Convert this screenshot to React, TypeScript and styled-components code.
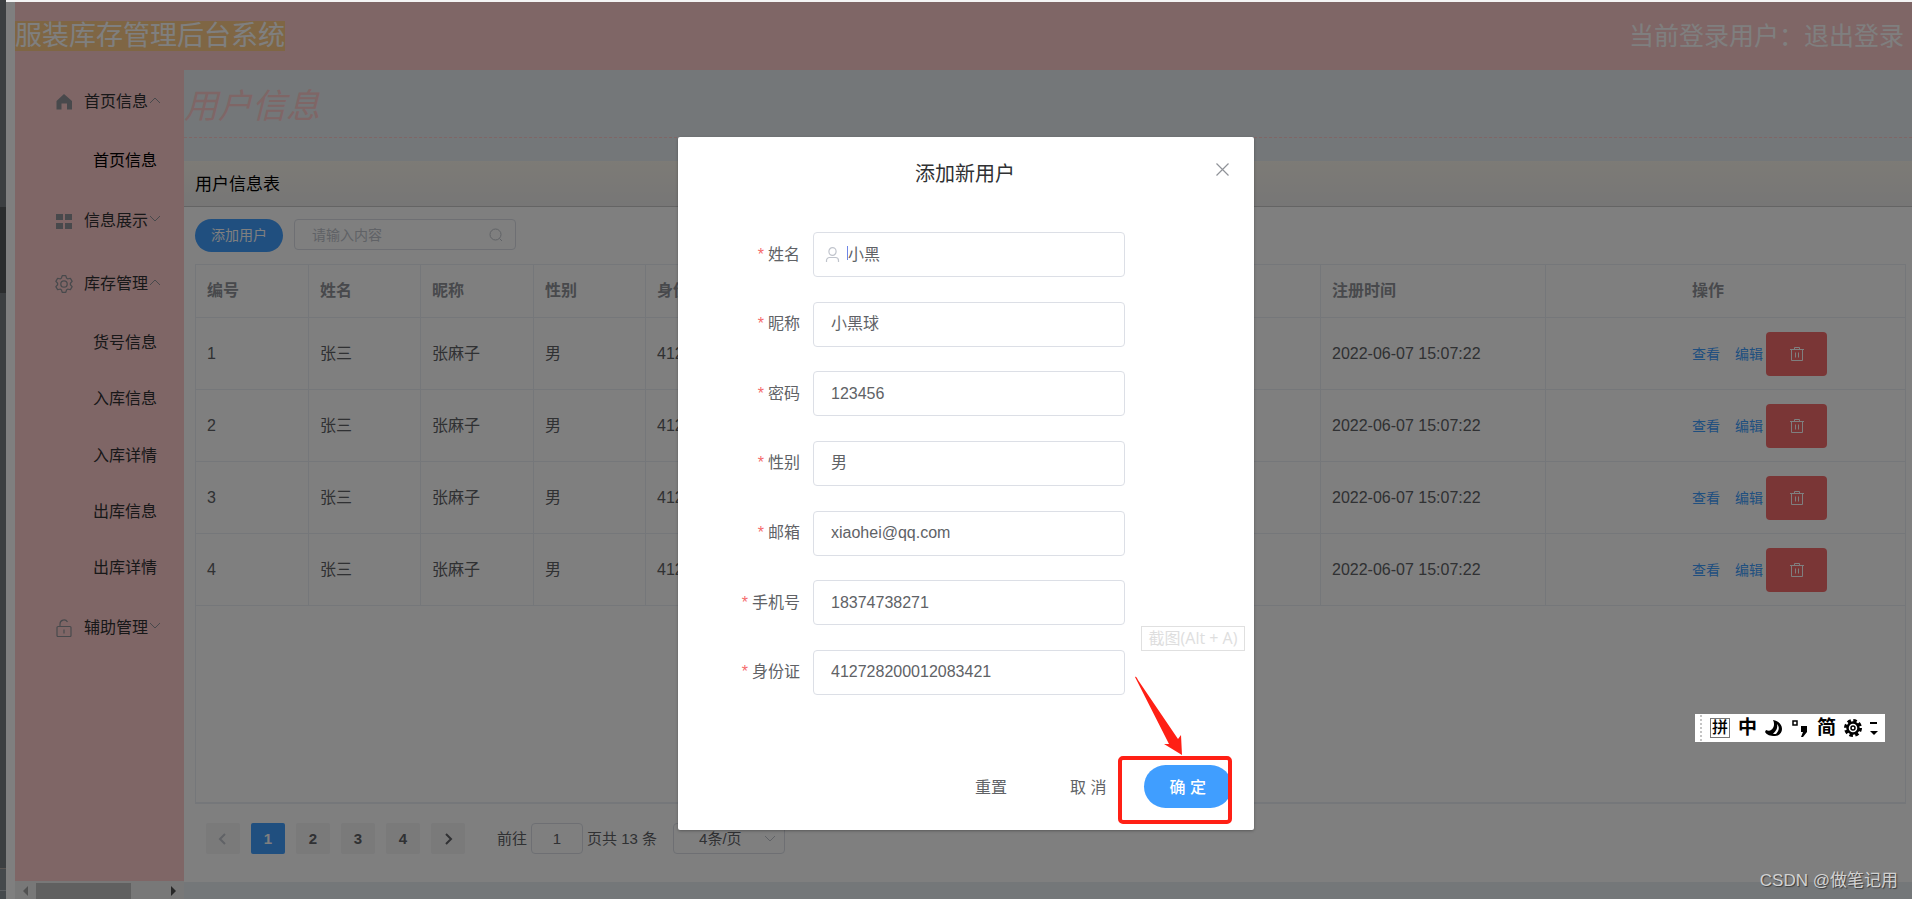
import React from 'react';
import styled, { createGlobalStyle } from 'styled-components';

const GlobalStyle = createGlobalStyle`
  * { box-sizing: border-box; }
  body {
    margin: 0;
    font-family: "Liberation Sans", "Noto Sans CJK SC", sans-serif;
    font-size: 16px;
    line-height: 24px;
    color: #606266;
    background: #fff;
  }
  button, input, select { font: inherit; color: inherit; margin: 0; }
  a { text-decoration: none; color: inherit; }
  ul { list-style: none; margin: 0; padding: 0; }
  svg { display: block; flex: none; }
`;

/* ---------- frame ---------- */

const Window = styled.div`
  display: flex;
  min-height: 100vh;
`;

const EditorStrip = styled.div`
  display: flex;
  flex-direction: column;
  width: 6px;
  background: #3c3f41;
  padding-top: 207px;
  justify-content: space-between;
`;

const StripThumb = styled.div`
  height: 86px;
  background: #2b2d2e;
`;

const StripFoot = styled.div`
  height: 31px;
  border-top: 1px solid #5a5552;
  background: linear-gradient(#45494c 21px, #5a5d60 21px, #5a5d60 22px, #45494c 22px);
`;

const Page = styled.div`
  position: relative;
  flex: 1;
  min-width: 0;
  display: flex;
  flex-direction: column;
  border-top: 2px solid #f4f4f4;
  padding-left: 9px;
`;

const TopBar = styled.header`
  display: flex;
  align-items: center;
  justify-content: space-between;
  height: 68px;
  padding-right: 8px;
  background: #ffcccc;
  color: #fff;
`;

const Brand = styled.h1`
  margin: 0;
  font-size: 27px;
  line-height: 30px;
  font-weight: 400;
  background: #ffcc88;
`;

const Account = styled.div`
  font-size: 25px;
  line-height: 30px;
`;

const Body = styled.div`
  flex: 1;
  display: flex;
`;

/* ---------- sidebar ---------- */

const Sidebar = styled.aside`
  display: flex;
  flex-direction: column;
  width: 169px;
  background: #ffcccc;
`;

const Menu = styled.nav`
  flex: 1;
`;

const MenuTitle = styled.a`
  display: flex;
  align-items: center;
  height: 63px;
  padding-left: 40px;
  color: #303133;
  svg:first-child { color: #909399; margin-right: 11px; }
  svg:last-child { color: #909399; margin: 0 0 3px 1px; }
`;

const SubMenu = styled.ul<{ $height: number }>`
  display: flex;
  flex-direction: column;
  height: ${p => p.$height}px;
`;

const SubItem = styled.li<{ $active?: boolean }>`
  flex: 1;
  display: flex;
  align-items: center;
  padding-left: 78px;
  color: ${p => (p.$active ? '#000' : '#303133')};
`;

const ScrollBar = styled.div`
  display: flex;
  align-items: flex-end;
  justify-content: space-between;
  height: 18px;
  background: #f1f1f1;
`;

const ScrollThumb = styled.div`
  width: 95px;
  height: 16px;
  margin-right: auto;
  background: #c1c1c1;
`;

/* ---------- content ---------- */

const Content = styled.main`
  flex: 1;
  min-width: 0;
  display: flex;
  flex-direction: column;
  padding-bottom: 17px;
  background: #e9eef3;
`;

const PageTitle = styled.h2`
  margin: 0 0 23px;
  height: 68px;
  padding-top: 13px;
  font-size: 34px;
  line-height: 46px;
  font-weight: 400;
  font-style: italic;
  color: #ffcccc;
  border-bottom: 1px dashed #ffcccc;
`;

const CardHead = styled.div`
  height: 46px;
  padding-left: 11px;
  font-size: 17px;
  line-height: 48px;
  color: #000;
  background: linear-gradient(#faf6ec, #eeedec);
  border-bottom: 1px solid #c8c8c8;
`;

const Card = styled.section`
  flex: 1;
  display: flex;
  flex-direction: column;
  padding: 12px 6px 28px 11px;
  background: #fff;
`;

const Toolbar = styled.div`
  display: flex;
  align-items: flex-start;
  gap: 11px;
  height: 45px;
`;

const AddButton = styled.button`
  width: 88px;
  height: 33px;
  padding: 0;
  border: 0;
  border-radius: 17px;
  background: #409eff;
  color: #fff;
  font-size: 14px;
  line-height: 31px;
`;

const SearchBox = styled.label`
  display: flex;
  align-items: center;
  width: 222px;
  height: 31px;
  padding: 0 12px 0 17px;
  border: 1px solid #dcdfe6;
  border-radius: 4px;
  color: #c0c4cc;
  input {
    flex: 1;
    min-width: 0;
    border: 0;
    padding: 0;
    outline: 0;
    background: none;
    font-size: 14px;
  }
  input::placeholder { color: #c0c4cc; }
`;

const TableFrame = styled.div`
  flex: 1;
  border: 1px solid #ebeef5;
  border-bottom-width: 2px;
`;

const Table = styled.table`
  width: 100%;
  table-layout: fixed;
  border-collapse: separate;
  border-spacing: 0;
  th, td {
    padding: 0 0 0 11px;
    text-align: left;
    white-space: nowrap;
    overflow: hidden;
    border-right: 1px solid #ebeef5;
    border-bottom: 1px solid #ebeef5;
  }
  th { height: 53px; color: #909399; font-weight: 700; }
  td { height: 72px; }
  th:last-child, td:last-child { padding-left: 146px; border-right: 0; }
`;

const Actions = styled.div`
  display: flex;
  align-items: center;
`;

const RowLink = styled.a`
  margin-right: 15px;
  font-size: 14px;
  color: #409eff;
  & + & { margin-right: 3px; }
`;

const DeleteButton = styled.button`
  display: flex;
  align-items: center;
  justify-content: center;
  width: 61px;
  height: 44px;
  border: 0;
  border-radius: 4px;
  background: #f56c6c;
  color: #fff;
`;

const Pager = styled.div`
  display: flex;
  align-items: center;
  gap: 11px;
  padding: 19px 0 0 11px;
  font-size: 15px;
`;

const PageButton = styled.button<{ $active?: boolean }>`
  display: flex;
  align-items: center;
  justify-content: center;
  width: 34px;
  height: 31px;
  padding: 0;
  border: 0;
  border-radius: 2px;
  font-weight: 700;
  color: ${p => (p.$active ? '#fff' : '#606266')};
  background: ${p => (p.$active ? '#409eff' : '#f4f4f5')};
  &:disabled { color: #c0c4cc; }
`;

const Jump = styled.label`
  display: flex;
  align-items: center;
  gap: 4px;
  margin: 0 5px 0 21px;
  input {
    width: 52px;
    height: 31px;
    text-align: center;
    border: 1px solid #dcdfe6;
    border-radius: 4px;
    background: none;
  }
`;

const SizePicker = styled.div`
  display: flex;
  align-items: center;
  svg { margin-left: -21px; color: #c0c4cc; pointer-events: none; }
  select {
    appearance: none;
    width: 112px;
    height: 31px;
    padding: 0 0 0 25px;
    border: 1px solid #dcdfe6;
    border-radius: 4px;
    background: none;
  }
`;

/* ---------- dialog ---------- */

const Mask = styled.div`
  position: absolute;
  inset: 0;
  display: flex;
  justify-content: center;
  align-items: flex-start;
  padding: 135px 0 0 14px;
  background: rgba(0, 0, 0, 0.5);
`;

const Dialog = styled.section`
  position: relative;
  width: 576px;
  padding: 24px 22px 22px 0;
  background: #fff;
  border-radius: 2px;
  box-shadow: 0 1px 3px rgba(0, 0, 0, 0.3);
`;

const DialogHead = styled.header`
  display: flex;
  justify-content: center;
  padding-left: 20px;
  margin-bottom: 44px;
  h3 {
    margin: 0;
    font-size: 20px;
    line-height: 27px;
    font-weight: 400;
    color: #303133;
  }
`;

const CloseButton = styled.button`
  position: absolute;
  top: 22px;
  right: 21px;
  padding: 2px;
  border: 0;
  background: none;
  color: #909399;
`;

const Form = styled.form`
  display: flex;
  flex-direction: column;
  justify-content: space-between;
  height: 463px;
`;

const Field = styled.div`
  display: flex;
  align-items: center;
  label { width: 122px; margin-right: 13px; text-align: right; }
  label::before { content: "*"; color: #f56c6c; margin-right: 4px; }
`;

const FieldBox = styled.div<{ $icon?: boolean }>`
  display: flex;
  align-items: center;
  width: 312px;
  height: 45px;
  padding-left: ${p => (p.$icon ? 11 : 17)}px;
  border: 1px solid #dcdfe6;
  border-radius: 4px;
  color: #c0c4cc;
  input {
    flex: 1;
    min-width: 0;
    padding: 0;
    border: 0;
    outline: 0;
    background: none;
    color: #606266;
  }
`;

const Caret = styled.span`
  width: 1px;
  height: 14px;
  margin: 0 0 4px 7px;
  background: #6f86e6;
`;

const DialogFoot = styled.footer`
  display: flex;
  justify-content: flex-end;
  gap: 11px;
  margin-top: 70px;
`;

const FootButton = styled.button<{ $primary?: boolean }>`
  height: 43px;
  padding: 2px 26px 0;
  border: 0;
  border-radius: 22px;
  background: ${p => (p.$primary ? '#409eff' : 'transparent')};
  color: ${p => (p.$primary ? '#fff' : '#606266')};
  font-weight: ${p => (p.$primary ? 500 : 400)};
`;

/* ---------- things lying over the page ---------- */

const Highlight = styled.div`
  position: absolute;
  right: 22px;
  bottom: 6px;
  width: 114px;
  height: 68px;
  border: 4px solid #ff2015;
  border-radius: 5px;
`;

const Arrow = styled.svg`
  position: absolute;
  right: 72px;
  bottom: 75px;
`;

const Hint = styled.div`
  position: absolute;
  right: 9px;
  bottom: 179px;
  width: 104px;
  height: 25px;
  border: 1px solid #e0e0e0;
  font-family: "Open Sans", "Noto Sans CJK SC", sans-serif;
  font-size: 16px;
  line-height: 23px;
  text-align: center;
  white-space: nowrap;
  color: #dedede;
`;

const ImeBar = styled.div`
  position: absolute;
  right: 27px;
  bottom: 157px;
  display: flex;
  align-items: center;
  gap: 8px;
  width: 190px;
  height: 28px;
  padding-left: 5px;
  background: #fff;
  color: #000;
  font-size: 19px;
  font-weight: 700;
  white-space: nowrap;
`;

const Dots = styled.span`
  height: 26px;
  border-left: 2px dotted #c4c4c4;
`;

const Boxed = styled.span`
  width: 20px;
  height: 20px;
  border: 1px solid #777;
  font-size: 16px;
  font-weight: 500;
  line-height: 18px;
  text-align: center;
`;

const Watermark = styled.div`
  position: absolute;
  right: 14px;
  bottom: 6px;
  font-size: 17px;
  color: #d2d2d2;
  text-shadow: 1px 1px 1px #3c3c3c;
`;

/* ---------- icons ---------- */

const Chevron = ({ dir, size = 12, width = 1 }: { dir: 'up' | 'down' | 'left' | 'right'; size?: number; width?: number }) => {
  const d = { up: 'M1 9 6 4l5 5', down: 'M1 3l5 5 5-5', left: 'M8 1 3 6l5 5', right: 'M4 1l5 5-5 5' }[dir];
  return (
    <svg width={size} height={size} viewBox="0 0 12 12" fill="none" stroke="currentColor" strokeWidth={width}>
      <path d={d} />
    </svg>
  );
};

const HomeIcon = () => (
  <svg width="18" height="18" viewBox="0 0 18 18" fill="currentColor">
    <path d="M9 1 17 8V16.500H12V10.500H6.500V16.500H1.500V8Z" />
  </svg>
);

const GridIcon = () => (
  <svg width="18" height="18" viewBox="0 0 18 18" fill="currentColor">
    <path d="M1 2h7v6H1zM10 2h7v6h-7zM1 11h7v6H1zM10 11h7v6h-7z" />
  </svg>
);

const gearPath =
  'M600.704 64a32 32 0 0 1 30.464 22.208l35.2 109.376c14.784 7.232 28.928 15.36 42.432 24.512l112.384-24.192a32 32 0 0 1 34.432 15.36L944.32 364.8a32 32 0 0 1-4.032 37.504l-77.12 85.12a357.12 357.12 0 0 1 0 49.024l77.12 85.248a32 32 0 0 1 4.032 37.504l-88.704 153.6a32 32 0 0 1-34.432 15.296L708.8 803.904c-13.44 9.088-27.648 17.28-42.368 24.512l-35.264 109.376A32 32 0 0 1 600.704 960H423.296a32 32 0 0 1-30.464-22.208L357.696 828.48a351.616 351.616 0 0 1-42.56-24.64l-112.32 24.256a32 32 0 0 1-34.432-15.36L79.68 659.2a32 32 0 0 1 4.032-37.504l77.12-85.248a357.12 357.12 0 0 1 0-48.896l-77.12-85.248A32 32 0 0 1 79.68 364.8l88.704-153.6a32 32 0 0 1 34.432-15.296l112.32 24.256c13.568-9.152 27.776-17.408 42.56-24.64l35.2-109.312A32 32 0 0 1 423.232 64H600.64zm-23.424 64H446.72l-36.352 113.088-24.512 11.968a294.113 294.113 0 0 0-34.816 20.096l-22.656 15.36-116.224-25.088-65.28 113.152 79.68 88.192-1.92 27.136a293.12 293.12 0 0 0 0 40.192l1.92 27.136-79.808 88.192 65.344 113.152 116.224-25.024 22.656 15.296a294.113 294.113 0 0 0 34.816 20.096l24.512 11.968L446.72 896h130.688l36.48-113.152 24.448-11.904a288.282 288.282 0 0 0 34.752-20.096l22.592-15.296 116.288 25.024 65.28-113.152-79.744-88.192 1.92-27.136a293.12 293.12 0 0 0 0-40.256l-1.92-27.136 79.808-88.128-65.344-113.152-116.288 24.96-22.592-15.232a287.616 287.616 0 0 0-34.752-20.096l-24.448-11.904L577.344 128zM512 320a192 192 0 1 1 0 384 192 192 0 0 1 0-384zm0 64a128 128 0 1 0 0 256 128 128 0 0 0 0-256z';

const GearIcon = () => (
  <svg width="18" height="18" viewBox="64 64 896 896" fill="currentColor">
    <path d={gearPath} />
  </svg>
);

const ImeGearIcon = () => (
  <svg width="18" height="18" viewBox="0 0 18 18" fill="none" stroke="#000">
    <circle cx="9" cy="9" r="7.500" strokeWidth="3" strokeDasharray="3.500 2.400" />
    <circle cx="9" cy="9" r="5.500" strokeWidth="2.500" />
    <circle cx="9" cy="9" r="2" strokeWidth="1.500" />
  </svg>
);

const LockIcon = () => (
  <svg width="18" height="18" viewBox="0 0 18 18" fill="none" stroke="currentColor" strokeWidth="1.200">
    <rect x="2" y="7.500" width="14" height="10" rx="1" />
    <path d="M5 7.500V5a4 4 0 0 1 7.500-2M9 10.500v4" />
  </svg>
);

const SearchIcon = () => (
  <svg width="14" height="14" viewBox="0 0 14 14" fill="none" stroke="currentColor">
    <circle cx="6.500" cy="6.500" r="5.500" />
    <path d="M10.500 10.500 13 13" />
  </svg>
);

const TrashIcon = () => (
  <svg width="16" height="16" viewBox="0 0 16 16" fill="none" stroke="currentColor">
    <path d="M1 3.500h14M5.500 3.500v-2h5v2M2.500 3.500v11h11v-11M6.500 6.500v5M9.500 6.500v5" />
  </svg>
);

const UserIcon = () => (
  <svg width="15" height="15" viewBox="0 0 15 15" fill="none" stroke="currentColor" strokeWidth="1.200">
    <ellipse cx="7.500" cy="4.500" rx="3.600" ry="3.900" />
    <path d="M1.500 15v-1.500a3 3 0 0 1 3-3h6a3 3 0 0 1 3 3V15" />
  </svg>
);

const CloseIcon = () => (
  <svg width="17" height="17" viewBox="0 0 17 17" fill="none" stroke="currentColor" strokeWidth="1.200">
    <path d="M2.500 2.500l12 12M14.500 2.500l-12 12" />
  </svg>
);

const MoonIcon = () => (
  <svg width="18" height="18" viewBox="0 0 18 18">
    <path d="M8 1c5 1 9 4 9 9 0 4-3 7-7 7-5 0-8-1-10-4l1-2c2 1 4 1 5 0 3-2 4-6 2-10z" />
    <path d="M12 5c3 3 2 7-1 10H8c3-3 5-6 4-10z" fill="#fff" />
  </svg>
);

const PunctuationIcon = () => (
  <svg width="18" height="18" viewBox="0 0 18 18">
    <rect x="2" y="2" width="4" height="4" fill="none" stroke="#000" strokeWidth="1.500" />
    <path d="M10 7h6v6l-4 5h-2l2-5h-2z" />
  </svg>
);

const ImeMenuIcon = () => (
  <svg width="8" height="14" viewBox="0 0 8 14">
    <path d="M0 1h7v2H0zM0 10h8l-4 4z" />
  </svg>
);

const ScrollArrow = ({ dir }: { dir: 'left' | 'right' }) => (
  <svg width="21" height="16" viewBox="0 0 21 16" fill={dir === 'left' ? '#a3a3a3' : '#505050'}>
    <path d={dir === 'left' ? 'M13 3v10L8 8z' : 'M8 3v10l5-5z'} />
  </svg>
);

/* ---------- data ---------- */

const menu = [
  { title: '首页信息', icon: <HomeIcon />, open: true, height: 56, items: ['首页信息'] },
  { title: '信息展示', icon: <GridIcon />, open: false, height: 0, items: [] },
  { title: '库存管理', icon: <GearIcon />, open: true, height: 281, items: ['货号信息', '入库信息', '入库详情', '出库信息', '出库详情'] },
  { title: '辅助管理', icon: <LockIcon />, open: false, height: 0, items: [] },
];

const columns: [string, number | undefined][] = [
  ['编号', 113], ['姓名', 112], ['昵称', 113], ['性别', 112],
  ['身份证', undefined], ['手机号', undefined], ['邮箱', undefined],
  ['注册时间', 225], ['操作', 359],
];

const users = [1, 2, 3, 4].map(id => [
  String(id), '张三', '张麻子', '男', '412728200012083421', '18374738271', 'xiaohei@qq.com', '2022-06-07 15:07:22',
]);

const fields = [
  ['name', '姓名', '小黑'],
  ['nick', '昵称', '小黑球'],
  ['password', '密码', '123456'],
  ['gender', '性别', '男'],
  ['email', '邮箱', 'xiaohei@qq.com'],
  ['phone', '手机号', '18374738271'],
  ['idcard', '身份证', '412728200012083421'],
];

export default function App() {
  return (
    <Window>
      <GlobalStyle />
      <EditorStrip>
        <StripThumb />
        <StripFoot />
      </EditorStrip>
      <Page>
        <TopBar>
          <Brand>服装库存管理后台系统</Brand>
          <Account>当前登录用户：<a href="#logout">退出登录</a></Account>
        </TopBar>
        <Body>
          <Sidebar>
            <Menu>
              {menu.map(m => (
                <React.Fragment key={m.title}>
                  <MenuTitle href="#menu">
                    {m.icon}
                    {m.title}
                    <Chevron dir={m.open ? 'up' : 'down'} />
                  </MenuTitle>
                  {m.open && (
                    <SubMenu $height={m.height}>
                      {m.items.map(s => (
                        <SubItem key={s} $active={s === '首页信息'}><a href="#page">{s}</a></SubItem>
                      ))}
                    </SubMenu>
                  )}
                </React.Fragment>
              ))}
            </Menu>
            <ScrollBar>
              <ScrollArrow dir="left" />
              <ScrollThumb />
              <ScrollArrow dir="right" />
            </ScrollBar>
          </Sidebar>
          <Content>
            <PageTitle>用户信息</PageTitle>
            <CardHead>用户信息表</CardHead>
            <Card>
              <Toolbar>
                <AddButton type="button">添加用户</AddButton>
                <SearchBox>
                  <input aria-label="搜索" placeholder="请输入内容" />
                  <SearchIcon />
                </SearchBox>
              </Toolbar>
              <TableFrame>
                <Table>
                  <colgroup>
                    {columns.map(([name, width]) => <col key={name} width={width} />)}
                  </colgroup>
                  <thead>
                    <tr>{columns.map(([name]) => <th key={name}>{name}</th>)}</tr>
                  </thead>
                  <tbody>
                    {users.map(row => (
                      <tr key={row[0]}>
                        {row.map((cell, i) => <td key={i}>{cell}</td>)}
                        <td>
                          <Actions>
                            <RowLink href="#view">查看</RowLink>
                            <RowLink href="#edit">编辑</RowLink>
                            <DeleteButton type="button" aria-label="删除"><TrashIcon /></DeleteButton>
                          </Actions>
                        </td>
                      </tr>
                    ))}
                  </tbody>
                </Table>
              </TableFrame>
              <Pager>
                <PageButton type="button" disabled aria-label="上一页"><Chevron dir="left" width={2} /></PageButton>
                {[1, 2, 3, 4].map(n => (
                  <PageButton key={n} type="button" $active={n === 1}>{n}</PageButton>
                ))}
                <PageButton type="button" aria-label="下一页"><Chevron dir="right" width={2} /></PageButton>
                <Jump>
                  前往
                  <input defaultValue="1" />
                  页共 13 条
                </Jump>
                <SizePicker>
                  <select aria-label="每页条数" defaultValue="4"><option value="4">4条/页</option></select>
                  <Chevron dir="down" />
                </SizePicker>
              </Pager>
            </Card>
          </Content>
        </Body>
        <Mask>
          <Dialog role="dialog" aria-labelledby="dialog-title">
            <DialogHead>
              <h3 id="dialog-title">添加新用户</h3>
              <CloseButton type="button" aria-label="关闭"><CloseIcon /></CloseButton>
            </DialogHead>
            <Form>
              {fields.map(([id, label, value]) => (
                <Field key={id}>
                  <label htmlFor={id}>{label}</label>
                  <FieldBox $icon={id === 'name'}>
                    {id === 'name' && <><UserIcon /><Caret /></>}
                    <input id={id} defaultValue={value} />
                  </FieldBox>
                </Field>
              ))}
            </Form>
            <DialogFoot>
              <FootButton type="button">重置</FootButton>
              <FootButton type="button">取 消</FootButton>
              <FootButton type="button" $primary>确 定</FootButton>
            </DialogFoot>
            <Hint>截图(Alt + A)</Hint>
            <Arrow width="48" height="80" viewBox="0 0 48 80" fill="#ff2015">
              <path d="M1 2C2 1 3 3 4 5L44 64L47 60L48 80L30 69L35 69Z" />
            </Arrow>
            <Highlight />
          </Dialog>
        </Mask>
        <ImeBar>
          <Dots />
          <Boxed>拼</Boxed>
          <span>中</span>
          <MoonIcon />
          <PunctuationIcon />
          <span>简</span>
          <ImeGearIcon />
          <ImeMenuIcon />
        </ImeBar>
        <Watermark>CSDN @做笔记用</Watermark>
      </Page>
    </Window>
  );
}
